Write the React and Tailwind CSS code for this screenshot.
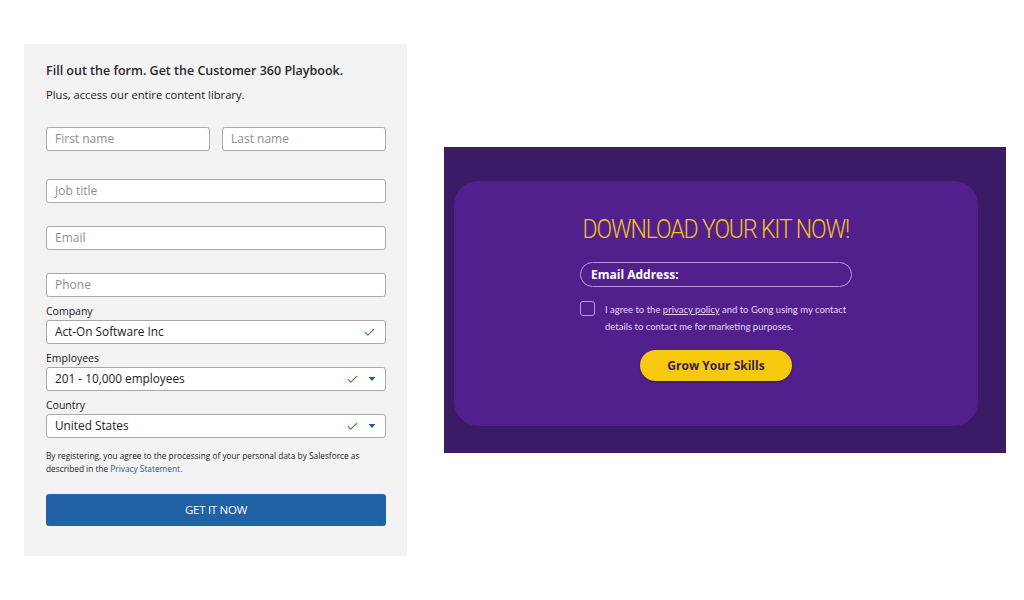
import { Check } from "lucide-react";

const Field = ({ placeholder, className = "" }) => (
  <div className={`h-[24px] bg-white border border-[#a8a8a8] rounded-[3px] flex items-center px-2 text-[12px] text-[#8f8f8f] ${className}`}>
    {placeholder}
  </div>
);

const Caret = () => (
  <svg width="8" height="6" viewBox="0 0 8 6" className="ml-[9px]">
    <path d="M0.5 1h7L4 5z" fill="#1f5aa0" />
  </svg>
);

const Filled = ({ label, value, select = false }) => (
  <div className="flex flex-col">
    <span className="text-[10.5px] leading-[14px] text-[#1a1a1a] mb-[2px]">{label}</span>
    <div className="h-[24px] bg-white border border-[#a8a8a8] rounded-[3px] flex items-center pl-2 pr-[9px] text-[11.8px] text-[#222]">
      <span className="flex-1">{value}</span>
      <Check className="w-[13px] h-[13px] text-[#3b9a3b]" strokeWidth={2} />
      {select && <Caret />}
    </div>
  </div>
);

const SalesforceForm = () => (
  <div className="w-[383px] h-[512px] bg-[#f3f3f3] pl-[22px] pr-[21px] pt-[19px] font-['Open_Sans',sans-serif]">
    <p className="text-[12.5px] font-semibold text-[#2a2a2a] leading-[16px]">Fill out the form. Get the Customer 360 Playbook.</p>
    <p className="text-[11.2px] text-[#222] leading-[16px] mt-[8px]">Plus, access our entire content library.</p>
    <div className="flex gap-[12px] mt-[24px]">
      <Field placeholder="First name" className="flex-1" />
      <Field placeholder="Last name" className="flex-1" />
    </div>
    <Field placeholder="Job title" className="mt-[28px]" />
    <Field placeholder="Email" className="mt-[23px]" />
    <Field placeholder="Phone" className="mt-[23px]" />
    <div className="flex flex-col gap-[7px] mt-[7px]">
      <Filled label="Company" value="Act-On Software Inc" />
      <Filled label="Employees" value="201 - 10,000 employees" select />
      <Filled label="Country" value="United States" select />
    </div>
    <div className="text-[8.3px] leading-[13px] text-[#222] mt-[11px]">
      <p>By registering, you agree to the processing of your personal data by Salesforce as</p>
      <p>
        described in the <span className="text-[#1f5aa0]">Privacy Statement</span>.
      </p>
    </div>
    <button className="w-full h-[32px] mt-[19px] bg-[#2161a6] rounded-[3px] text-white text-[11.5px] tracking-tight">
      GET IT NOW
    </button>
  </div>
);

const GongKit = () => (
  <div className="w-[562px] h-[306px] bg-[#3b1a66] pl-[10px] pt-[34px] pr-[28px] pb-[27px]">
    <div className="h-full bg-[#52208c] rounded-[24px] flex flex-col items-center pt-[34px]">
      <h2 className="font-['Roboto',sans-serif] font-light text-[#f3c21b] text-[25px] leading-[30px] tracking-[-1.2px] scale-x-[0.92]">
        DOWNLOAD YOUR KIT NOW!
      </h2>
      <div className="w-[272px] h-[25px] mt-[17px] border-[1.5px] border-[#b69ae0] rounded-full flex items-center px-[10px] text-white text-[12px] font-bold font-['Open_Sans',sans-serif]">
        Email Address:
      </div>
      <div className="w-[272px] flex mt-[14px] font-['Lato',sans-serif]">
        <div className="w-[15px] h-[15px] border-[1.5px] border-[#b69ae0] rounded-[3px] shrink-0" />
        <div className="ml-[10px] text-[9.5px] leading-[17px] text-[#e2d6f2]">
          <p>
            I agree to the <span className="underline">privacy policy</span> and to Gong using my contact
          </p>
          <p>details to contact me for marketing purposes.</p>
        </div>
      </div>
      <button className="w-[152px] h-[31px] mt-[15px] bg-[#f6c90e] rounded-full text-[#3d1b5c] text-[12px] font-bold font-['Open_Sans',sans-serif] shadow-[0_1px_2px_rgba(0,0,0,0.35)]">
        Grow Your Skills
      </button>
    </div>
  </div>
);

export default function App() {
  return (
    <div className="w-[1024px] h-[600px] bg-white flex">
      <div className="pl-[24px] pt-[44px]">
        <SalesforceForm />
      </div>
      <div className="pl-[37px] pt-[147px]">
        <GongKit />
      </div>
    </div>
  );
}
